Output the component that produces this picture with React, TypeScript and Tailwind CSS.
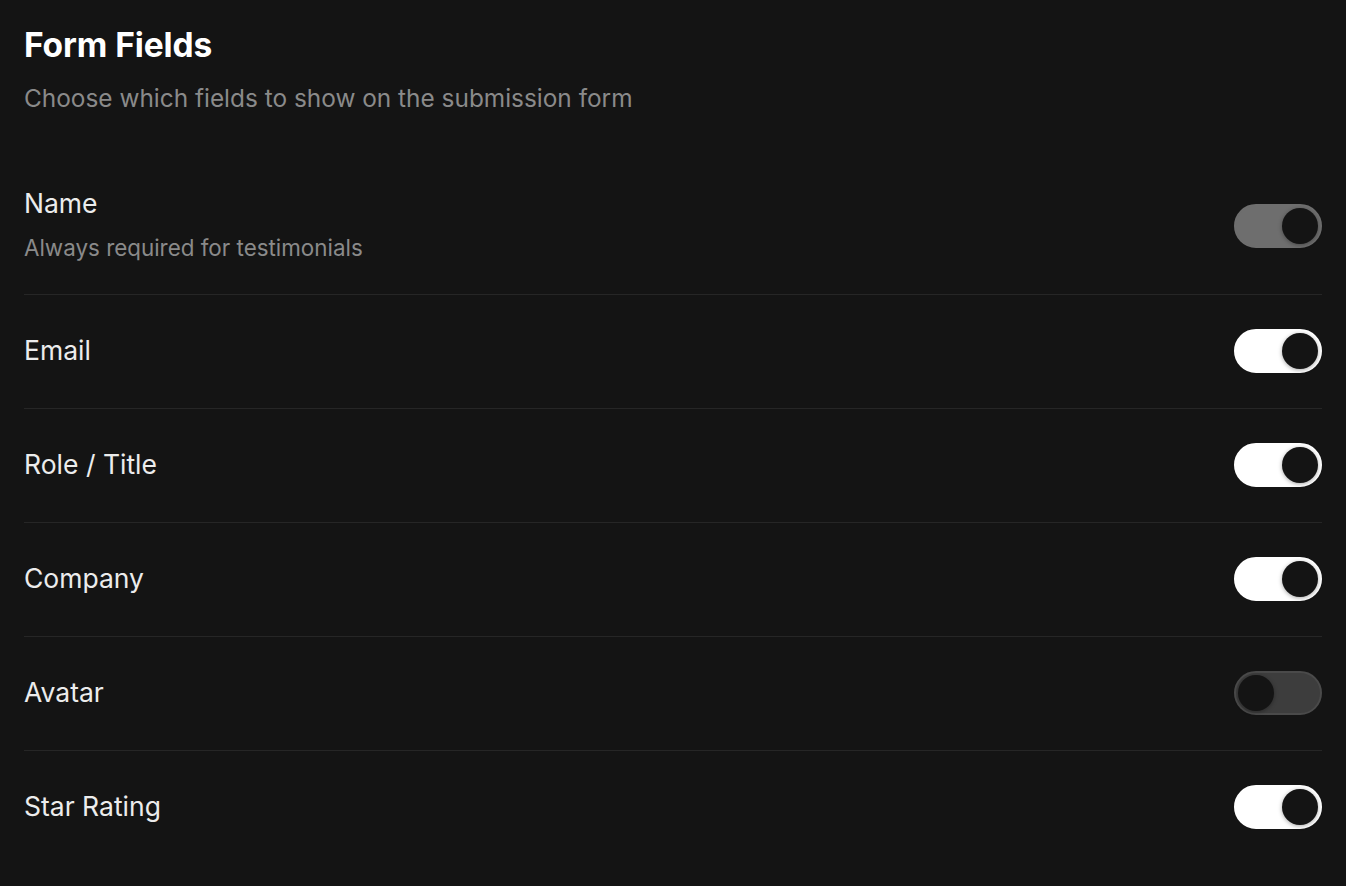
import { useState } from 'react'

type Field = {
    id: string
    label: string
    hint?: string
    on: boolean
    locked?: boolean
}

const initialFields: Field[] = [
    { id: 'name', label: 'Name', hint: 'Always required for testimonials', on: true, locked: true },
    { id: 'email', label: 'Email', on: true },
    { id: 'role', label: 'Role / Title', on: true },
    { id: 'company', label: 'Company', on: true },
    { id: 'avatar', label: 'Avatar', on: false },
    { id: 'rating', label: 'Star Rating', on: true },
]

function Toggle({ on, locked, onClick }: { on: boolean; locked?: boolean; onClick: () => void }) {
    const track = locked
        ? 'bg-[#6e6e6e] border-[#6e6e6e]'
        : on
            ? 'bg-white border-white'
            : 'bg-[#3d3d3d] border-[#4a4a4a]'

    return (
        <button
            type="button"
            role="switch"
            aria-checked={on}
            disabled={locked}
            onClick={onClick}
            className={`flex h-[44px] w-[88px] shrink-0 items-center rounded-full border-2 p-[2px] ${track} ${on ? 'justify-end' : 'justify-start'}`}
        >
            <span className="block h-[36px] w-[36px] rounded-full bg-[#141414] shadow-[0_1px_4px_rgba(0,0,0,0.35)]" />
        </button>
    )
}

export default function App() {
    const [fields, setFields] = useState(initialFields)

    function toggle(id: string) {
        setFields((prev) => prev.map((f) => (f.id === id && !f.locked ? { ...f, on: !f.on } : f)))
    }

    return (
        <div className="min-h-[886px] bg-[#141414] px-[24px] pt-[24px] font-['Inter',sans-serif]">
            <h2 className="text-[33.5px] font-bold leading-[42px] tracking-[-0.1px] text-white">Form Fields</h2>
            <p className="mt-[15px] text-[24.4px] leading-[34px] text-[#8a8a8a]">
                Choose which fields to show on the submission form
            </p>

            <div className="mt-[42px]">
                {fields.map((f, i) => (
                    <div
                        key={f.id}
                        className={`flex items-center justify-between ${f.hint ? 'pt-[28px] pb-[28px]' : 'pt-[34px] pb-[35px]'} ${i < fields.length - 1 ? 'border-b border-[#262626]' : ''}`}
                    >
                        <div className={f.hint ? '' : '-mt-[2px]'}>
                            <div className="text-[26.5px] leading-[36px] text-[#ececec]">{f.label}</div>
                            {f.hint && (
                                <div className="mt-[9px] text-[22.4px] leading-[36px] text-[#8a8a8a]">{f.hint}</div>
                            )}
                        </div>
                        <Toggle on={f.on} locked={f.locked} onClick={() => toggle(f.id)} />
                    </div>
                ))}
            </div>
        </div>
    )
}
